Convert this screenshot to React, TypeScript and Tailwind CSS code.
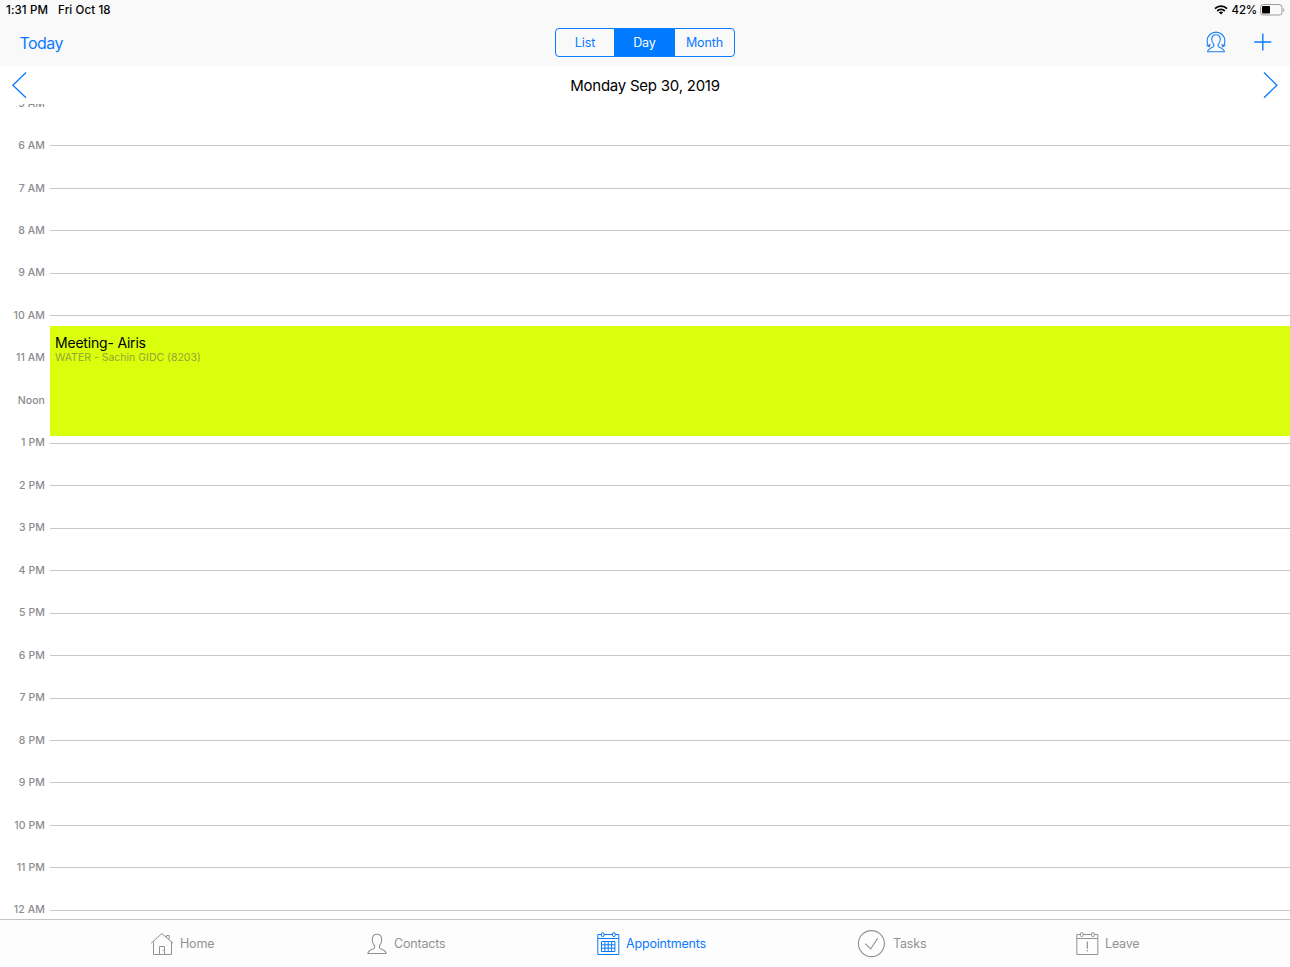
import type { ReactNode } from 'react';

const HOURS = [
    '5 AM', '6 AM', '7 AM', '8 AM', '9 AM', '10 AM', '11 AM', 'Noon',
    '1 PM', '2 PM', '3 PM', '4 PM', '5 PM', '6 PM', '7 PM', '8 PM',
    '9 PM', '10 PM', '11 PM', '12 AM',
];

function WifiIcon() {
    return (
        <svg width="14" height="10" viewBox="0 0 14 10" fill="none" stroke="#000" strokeWidth="1.8">
            <path d="M1 3.6a8.6 8.6 0 0 1 12 0" />
            <path d="M3.2 6a5.4 5.4 0 0 1 7.6 0" />
            <path d="M7 9.6 4.9 7.5a3 3 0 0 1 4.2 0z" fill="#000" stroke="none" />
        </svg>
    );
}

function BatteryIcon() {
    return (
        <svg width="25" height="12" viewBox="0 0 25 12" fill="none">
            <rect x="0.5" y="0.5" width="21.5" height="10.5" rx="2.8" stroke="#9b9b9b" />
            <rect x="2" y="2" width="8" height="7.5" rx="1" fill="#000" />
            <path d="M23.3 4v4c1.4-.6 1.4-3.4 0-4z" fill="#9b9b9b" />
        </svg>
    );
}

function SwitchUserIcon() {
    return (
        <svg width="20" height="22" viewBox="0 0 20 22" fill="none" stroke="#1a80f0" strokeWidth="1.1">
            <path d="M3.1 15.6A8.9 8.9 0 1 1 16.9 15.6" />
            <path d="M.5 14.3l2.8 1.4.8-2.9M19.4 14l-2.7 1.7-.9-2.9" />
            <path
                d="M7.8 13.4C6.4 12.2 5.7 10.4 5.7 8.1c0-2.8 1.6-4.4 4.3-4.4s4.3 1.6 4.3 4.4c0 2.3-.7 4.1-2.1 5.3v1.9c0 1.2 5.9 1.6 6.2 5.5H1.6c.3-3.9 6.2-4.3 6.2-5.5z"
                fill="#f9f9f9"
            />
        </svg>
    );
}

function HomeIcon() {
    return (
        <svg width="24" height="24" viewBox="0 0 24 24" fill="none" stroke="#929292" strokeWidth="1">
            <path d="M1.2 11.1 11.9 1.5 22.8 11.1" />
            <path d="M3.5 9.5v13h18v-13M16.5 5.2V3.5h2.7v4" />
            <path d="M9.5 22.5v-8h5v8" />
            <path d="M12.9 18v1" />
        </svg>
    );
}

function PersonIcon() {
    return (
        <svg width="20" height="22" viewBox="0 0 20 22" fill="none" stroke="#929292" strokeWidth="1.1">
            <path d="M7.5 12.5C5.9 11.2 5.3 9.4 5.3 6.5 5.3 3 7 1.2 10 1.2s4.7 1.8 4.7 5.3c0 2.9-.6 4.7-2.2 6v2.2c0 1.8 6.3 1.5 6.6 5.8H.9c.3-4.3 6.6-4 6.6-5.8z" />
        </svg>
    );
}

function CalendarIcon({ alert = false }: { alert?: boolean }) {
    return (
        <svg width="23" height="24" viewBox="0 0 23 24" fill="none" stroke="currentColor" strokeWidth="1">
            <path d="M4.3 2.5H.8v20h21v-20h-3.1M7.1 2.5h8.8M.8 6.5h21" />
            <rect x="4.3" y=".6" width="2.8" height="4" rx="1.4" />
            <rect x="15.5" y=".6" width="2.8" height="4" rx="1.4" />
            {alert ? (
                <path d="M11.3 9.5v7.3M11.3 18v1.5" strokeWidth="1.2" />
            ) : (
                <path d="M4.5 9.5h13.4v10H4.5zM4.5 12.8h13.4M4.5 16.2h13.4M7.9 9.5v10M11.2 9.5v10M14.6 9.5v10" />
            )}
        </svg>
    );
}

function CheckIcon() {
    return (
        <svg width="28" height="28" viewBox="0 0 28 28" fill="none" stroke="#929292" strokeWidth="1.1">
            <circle cx="14.4" cy="13.6" r="13" />
            <path d="M8.2 13.6l5.4 5.4L20.6 8.4" />
        </svg>
    );
}

function Chevron({ right = false }: { right?: boolean }) {
    return (
        <svg width="16" height="28" viewBox="0 0 16 28" fill="none" stroke="#0a7aff" strokeWidth="1.3">
            <path d={right ? 'M1 1.5 13.9 14.2 1 26.8' : 'M15 1.5 1.9 14.2 15 26.8'} />
        </svg>
    );
}

interface TabProps {
    icon: ReactNode;
    label: string;
    className: string;
}

function Tab({ icon, label, className }: TabProps) {
    return (
        <button className={`flex shrink-0 items-center text-[12.5px] ${className}`}>
            {icon}
            <span className="pt-0.5 tracking-[-0.18px]">{label}</span>
        </button>
    );
}

export default function App() {
    return (
        <div className="flex h-[967px] w-[1290px] flex-col overflow-hidden bg-white font-['Inter',sans-serif] text-black">
            <header className="h-[66px] shrink-0 bg-[#f9f9f9]">
                {/* Status bar */}
                <div className="flex h-5 items-center justify-between pl-1.5 pr-[5px] text-[11.5px] font-medium">
                    <div className="flex gap-2.5 pt-0.5 tracking-[0.12px]">
                        <span>1:31 PM</span>
                        <span>Fri Oct 18</span>
                    </div>
                    <div className="flex items-center">
                        <WifiIcon />
                        <span className="ml-1 mr-[3px] pt-0.5 tracking-[-0.2px]">42%</span>
                        <BatteryIcon />
                    </div>
                </div>

                {/* Navigation bar */}
                <div className="grid h-[46px] grid-cols-[1fr_180px_1fr] items-center pb-0.5 text-[#0a7aff]">
                    <button className="justify-self-start pl-[19.5px] pt-0.5 text-[16px] tracking-[-0.55px]">Today</button>
                    <div className="flex h-[29px] overflow-hidden rounded-[4px] border border-[#0a7aff] text-[12.5px] tracking-[-0.1px]">
                        <button className="w-[58px] pt-0.5">List</button>
                        <button className="w-[61px] bg-[#007aff] pt-0.5 text-white">Day</button>
                        <button className="flex-1 pt-0.5">Month</button>
                    </div>
                    <div className="flex items-center gap-7 justify-self-end pr-[18px]">
                        <SwitchUserIcon />
                        <svg width="18" height="18" viewBox="0 0 18 18" stroke="#0a7aff" strokeWidth="1.4">
                            <path d="M8.8 .5v17M.3 9h17" />
                        </svg>
                    </div>
                </div>
            </header>

            <div className="flex h-[38px] shrink-0 items-center justify-between px-[11px]">
                <Chevron />
                <h1 className="pt-0.5 text-[15px] tracking-[-0.24px]">Monday Sep 30, 2019</h1>
                <Chevron right />
            </div>

            {/* Day timeline */}
            <main className="relative h-[815px] shrink-0 overflow-hidden">
                <div className="-mt-[21.8px]">
                    {HOURS.map((hour) => (
                        <div key={hour} className="flex h-[42.47px] items-center">
                            <span className="w-[50px] pr-[5px] text-right text-[10.5px] font-medium tracking-[0.1px] text-[#8c8c8f]">
                                {hour}
                            </span>
                            <div className="h-px flex-1 bg-[#c8c7cc]" />
                        </div>
                    ))}
                </div>
                <div className="absolute left-[50px] right-0 top-[222px] h-[110px] bg-[#d9ff0d] pl-[5px] pt-2">
                    <div className="text-[14px] leading-[18px] tracking-[-0.2px]">Meeting- Airis</div>
                    <div className="text-[10.5px] leading-[11px] text-[#96a536]">
                        WATER - Sachin GIDC (8203)
                    </div>
                </div>
            </main>

            <nav className="flex h-12 shrink-0 items-center border-t border-[#c4c4c4] bg-[#fdfdfd] pl-[150px] text-[#929292]">
                <Tab icon={<HomeIcon />} label="Home" className="w-[217px] gap-1.5" />
                <Tab icon={<PersonIcon />} label="Contacts" className="w-[230px] gap-[7px]" />
                <Tab icon={<CalendarIcon />} label="Appointments" className="w-[260px] gap-1.5 text-[#0a7aff]" />
                <Tab icon={<CheckIcon />} label="Tasks" className="w-[219px] gap-2" />
                <Tab icon={<CalendarIcon alert />} label="Leave" className="gap-1.5" />
            </nav>
        </div>
    );
}
